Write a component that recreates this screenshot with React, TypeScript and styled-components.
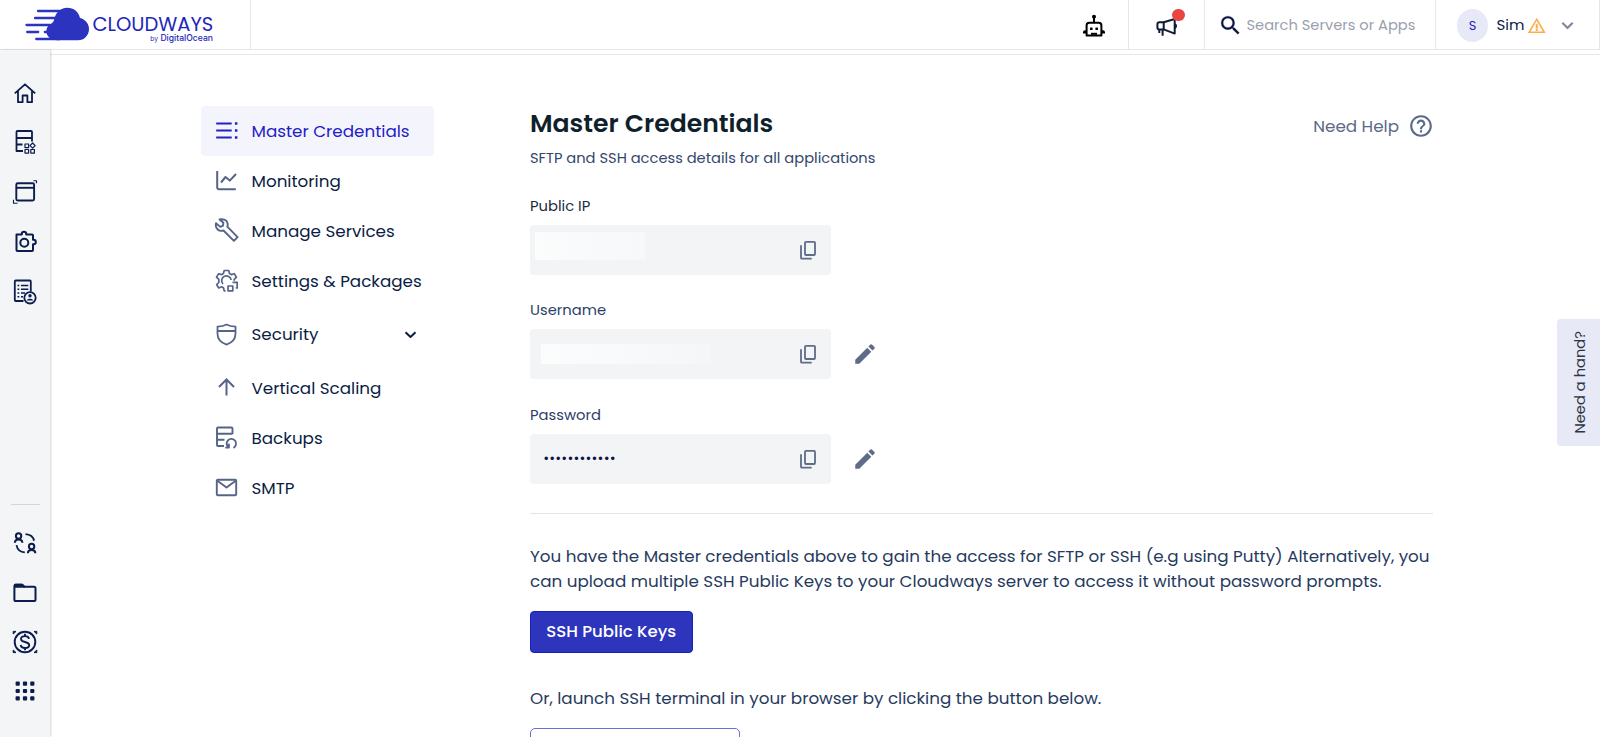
import React from 'react';
import styled, { createGlobalStyle } from 'styled-components';
import { MdEdit, MdExpandMore, MdHelpOutline, MdSearch, MdWarningAmber } from 'react-icons/md';

const GlobalStyle = createGlobalStyle`
  *, *::before, *::after { box-sizing: border-box; }
  body {
    margin: 0;
    background: #fff;
    color: #0b1c45;
    font-family: Poppins, Inter, "Liberation Sans", sans-serif;
    font-size: 16.76px;
    overflow: hidden;
  }
  svg { display: block; flex: none; }
`;

const Page = styled.div`
  height: 737px;
  display: flex;
  flex-direction: column;
  overflow: hidden;
`;

/* ---------- header ---------- */

const Header = styled.header`
  flex: none;
  height: 50px;
  display: flex;
  border-bottom: 1px solid #e6e7e9;
`;

const Brand = styled.div`
  width: 251px;
  padding-left: 25px;
  display: flex;
  border-right: 1px solid #e6e7eb;
  color: #2b33bf;
`;

const BrandText = styled.div`
  width: 121px;
  margin-left: 2.5px;
  padding-top: 14.5px;
  display: flex;
  flex-direction: column;
`;

const BrandName = styled.span`
  font-size: 19.5px;
  font-weight: 400;
  line-height: 20px;
  color: #1e27b8;
`;

const BrandOwner = styled.span`
  align-self: flex-end;
  font-family: Inter, sans-serif;
  font-size: 8.6px;
  font-weight: 500;
  line-height: 9px;
  margin-top: -1px;
  margin-right: 0.5px;
  color: #1e27b8;
`;

const BrandBy = styled.span`
  font-size: 6.6px;
  font-weight: 400;
  margin-right: 2.5px;
`;

const HeaderCell = styled.div<{ $width: number }>`
  width: ${(p) => p.$width}px;
  display: flex;
  align-items: center;
  border-right: 1px solid #e6e7eb;
`;

const RobotCell = styled(HeaderCell)`
  margin-left: auto;
  padding: 3px 0 0 21px;
  color: #000;
`;

const NewsCell = styled(HeaderCell)`
  position: relative;
  padding: 4px 0 0 25px;
  color: #101c33;
`;

const Badge = styled.i`
  position: absolute;
  left: 43.5px;
  top: 8.5px;
  width: 12.5px;
  height: 12.5px;
  border-radius: 50%;
  background: #ec4343;
`;

const SearchCell = styled(HeaderCell)`
  padding: 2px 0 0 12.5px;
  gap: 4px;
  color: #9a9fae;
  font-size: 14.67px;
  svg { color: #0a1440; }
  path:last-child { stroke: currentColor; stroke-width: 0.2; }
`;

const UserCell = styled(HeaderCell)`
  padding: 2px 0 0 21px;
  svg { margin-left: 3px; }
`;

const Avatar = styled.span`
  width: 31px;
  height: 32.5px;
  border-radius: 50%;
  display: grid;
  place-items: center;
  background: #e8e9f7;
  color: #2024c4;
  font-size: 13px;
`;

const UserName = styled.span`
  margin: -2px 0 0 8.5px;
  font-size: 15px;
`;

const WarningIcon = styled(MdWarningAmber)`
  color: #ffad49;
  path:last-child { stroke: currentColor; stroke-width: 0.6; }
`;

const Chevron = styled(MdExpandMore)`
  && { margin-left: 9px; }
  color: #7d879b;
  path:last-child { stroke: currentColor; stroke-width: 0.3; }
`;

/* ---------- frame ---------- */

const Frame = styled.div`
  flex: 1;
  min-height: 0;
  display: flex;
`;

const Sidebar = styled.nav`
  z-index: 1;
  flex: none;
  width: 50px;
  padding: 18.5px 0 21px;
  display: flex;
  flex-direction: column;
  background: #f3f5f7;
  box-shadow: 1px 0 2px rgba(0, 0, 0, 0.16);
  color: #0b1c4d;
`;

const SideItem = styled.a`
  height: 49.5px;
  display: flex;
  align-items: center;
  justify-content: center;
`;

const SideRule = styled.hr`
  width: 29px;
  margin: auto auto 13px 11px;
  border: 0;
  border-top: 1.5px solid #d3d5d9;
`;

const Main = styled.main`
  flex: 1;
  min-width: 0;
  display: flex;
  flex-direction: column;
`;

const TopStrip = styled.div`
  flex: none;
  height: 5px;
  border-bottom: 1px solid #e6e7e9;
`;

const Columns = styled.div`
  display: flex;
  padding-left: 151px;
`;

/* ---------- server menu ---------- */

const Menu = styled.nav`
  width: 233px;
  padding-top: 50.5px;
`;

const MenuItem = styled.a<{ $active?: boolean; $tall?: boolean }>`
  height: ${(p) => (p.$tall ? 56.4 : 50.15)}px;
  padding: 0 17px 0 12.5px;
  display: flex;
  align-items: center;
  gap: 13px;
  border-radius: 4px;
  background: ${(p) => (p.$active ? '#f4f5fc' : 'transparent')};
  color: ${(p) => (p.$active ? '#2420c4' : '#0b1c45')};
  > svg:first-child { color: ${(p) => (p.$active ? '#2420c4' : '#566488')}; }
`;

const MenuLabel = styled.span`
  flex: 1;
  white-space: nowrap;
`;

/* ---------- content ---------- */

const Content = styled.section`
  width: 903px;
  margin-left: 96px;
  padding-top: 50px;
`;

const TitleRow = styled.div`
  display: flex;
  justify-content: space-between;
  align-items: flex-start;
`;

const Title = styled.h1`
  margin: 0;
  font-size: 25.14px;
  font-weight: 600;
  line-height: 38px;
  color: #101f2c;
`;

const Help = styled.a`
  display: flex;
  align-items: center;
  gap: 8.5px;
  margin: 8px -0.5px 0 0;
  color: #5c6a87;
  line-height: 26px;
`;

const Subtitle = styled.p`
  margin: 2.7px 0 0;
  font-size: 14.67px;
  line-height: 24px;
  color: #34476d;
`;

const Field = styled.div`
  height: 104.8px;
  padding-top: 24px;
`;

const Label = styled.label<{ $dark?: boolean }>`
  display: block;
  font-size: 14.75px;
  line-height: 24px;
  color: ${(p) => (p.$dark ? '#1f2b3f' : '#2d4068')};
`;

const FieldRow = styled.div`
  margin-top: 7px;
  display: flex;
  align-items: center;
  gap: 20.5px;
  color: #5f6c88;
`;

const ValueBox = styled.div`
  width: 301px;
  height: 50px;
  padding-right: 13px;
  display: flex;
  align-items: center;
  justify-content: space-between;
  border-radius: 4px;
  background: #f3f4f6;
`;

const Redacted = styled.span<{ $width: number; $height: number; $left: number; $lift?: number }>`
  width: ${(p) => p.$width}px;
  height: ${(p) => p.$height}px;
  margin-left: ${(p) => p.$left}px;
  margin-bottom: ${(p) => p.$lift ?? 0}px;
  background: linear-gradient(90deg, #fbfcfc, #f9fafb 40%, ${(p) => (p.$lift ? '#f7f8fa' : '#f5f6f8')});
`;

const Dots = styled.span`
  margin-left: 14px;
  font-family: "Liberation Sans", sans-serif;
  font-size: 12.6px;
  letter-spacing: 1.63px;
  color: #0b1745;
`;

const Rule = styled.hr`
  margin: 29.2px 0 0;
  border: 0;
  border-top: 1px solid #e3e4e7;
`;

const Paragraph = styled.p<{ $top: number }>`
  margin: ${(p) => p.$top}px 0 0;
  line-height: 25.14px;
  white-space: nowrap;
  color: #263a60;
`;

const PrimaryButton = styled.button`
  display: block;
  width: 162.5px;
  height: 41.5px;
  margin-top: 16.5px;
  padding: 0;
  border: 1px solid #1a1fb4;
  border-radius: 4px;
  background: #2d35bd;
  color: #fff;
  font: 500 16.55px Poppins, Inter, sans-serif;
`;

const OutlineButton = styled.button`
  display: block;
  width: 210px;
  height: 42px;
  margin-top: 17px;
  border: 1px solid #6b70d6;
  border-radius: 5px;
  background: #fff;
`;

const HandTab = styled.aside`
  position: absolute;
  right: 0;
  top: 318.5px;
  width: 43.5px;
  height: 127px;
  display: grid;
  place-items: center;
  border-radius: 4px 0 0 4px;
  background: #e8e9f7;
  color: #2b3744;
  font-size: 14.7px;
  span {
    writing-mode: vertical-rl;
    transform: rotate(180deg);
    margin-left: 4px;
    white-space: nowrap;
  }
`;

/* ---------- icons ---------- */

type IconProps = { size?: number; box?: number; stroke?: number; children: React.ReactNode };

const Icon = ({ size = 30, box = 30, stroke = 1.8, children }: IconProps) => (
  <svg
    width={size}
    height={size}
    viewBox={`0 0 ${box} ${box}`}
    fill="none"
    stroke="currentColor"
    strokeWidth={stroke}
    strokeLinejoin="round"
  >
    {children}
  </svg>
);

const CloudMark = () => (
  <svg width="65" height="49" viewBox="25 0 65 49" fill="currentColor">
    <path d="M57 40.3c-6 0-10.7-4-10.7-9 0-3.200 1.700-5.500 4.200-7.300 1.200-.8 2.400-1.500 3.300-3.300C55.600 12.500 60 7.700 67.300 7.700c6.500 0 11.300 4 12.700 10.300 5.300 1.300 9 5.600 9 11 0 6.300-4.800 11.300-11 11.300z" />
    <path
      d="M38 11h22M35 18h20M26.500 25H50M27.200 32h11M44.800 32h4M36.200 39H60"
      stroke="currentColor"
      strokeWidth="2.300"
      strokeLinecap="round"
    />
  </svg>
);

const RobotIcon = () => (
  <Icon size={24} box={24} stroke={2}>
    <circle cx="12" cy="2.800" r="2" fill="currentColor" stroke="none" />
    <path d="M12 4v5" />
    <path d="M7.200 8.800h9.600a2.600 2.600 0 0 1 2.600 2.600v10H4.600v-10a2.600 2.600 0 0 1 2.600-2.600z" />
    <path d="M4.600 16.200H3a2 2 0 0 0-2 2v1.200h3.600M19.400 16.200H21a2 2 0 0 1 2 2v1.200h-3.600" fill="currentColor" stroke="none" />
    <rect x="8" y="13.500" width="2.600" height="2.600" rx=".6" fill="currentColor" stroke="none" />
    <rect x="13.400" y="13.500" width="2.600" height="2.600" rx=".6" fill="currentColor" stroke="none" />
    <path d="M9 19.800h6" />
  </Icon>
);

const MegaphoneIcon = () => (
  <Icon size={24} box={24} stroke={2}>
    <path d="M9.700 7.200H5.400a2 2 0 0 0-2 2v3.200a2 2 0 0 0 2 2h4.300z" />
    <path d="M9.700 7.200 20.700 4v14.600l-11-4.200" />
    <path d="M5.300 14.400v3.500M8.600 14.400v6.300" />
    <path d="M20.700 9.200a2 2 0 0 1 0 3.800" fill="currentColor" />
  </Icon>
);

const HomeIcon = () => (
  <Icon>
    <path d="M4.800 15.400 15 6.300l10.200 9.100M8 13v11.200h4.600v-6.700h4.800v6.700H22V13" />
  </Icon>
);

const ServerAppsIcon = () => (
  <Icon>
    <path d="M22 13.500V4a1 1 0 0 0-1-1H7.500a1 1 0 0 0-1 1v19h6.500M6.500 10H22M6.500 16.500h6" />
    <g strokeWidth="1.200">
      <rect x="15" y="16" width="3.600" height="3.600" />
      <rect x="15" y="21.500" width="3.600" height="3.600" />
      <rect x="20.800" y="21.500" width="3.600" height="3.600" />
      <path d="m22.600 15 2.600 2.600-2.600 2.600-2.600-2.600z" />
    </g>
  </Icon>
);

const WindowIcon = () => (
  <Icon stroke={1.9}>
    <rect x="6.300" y="6.300" width="17.800" height="17.200" rx="1.500" />
    <path d="M6.300 10.800h17.800" />
    <path d="M23.500 3.700h3v2.500M3.500 22.800v3.500h4" strokeWidth="1.100" />
  </Icon>
);

const PuzzleIcon = () => (
  <Icon stroke={2}>
    <path d="M6.500 7.500h5.300V7a2.200 2.200 0 0 1 4.400 0v.5H22a1 1 0 0 1 1 1v4.300h.600a2.200 2.200 0 0 1 0 4.400H23v5.700a1 1 0 0 1-1 1H7.500a1 1 0 0 1-1-1z" />
    <circle cx="14.300" cy="15.700" r="4" />
  </Icon>
);

const ListUserIcon = () => (
  <Icon>
    <path d="M13.500 25H5.800a1 1 0 0 1-1-1V5.500a1 1 0 0 1 1-1h14a1 1 0 0 1 1 1v10" />
    <path d="M7.500 9.500h1.800M11 9.500h7.300M7.500 13.200h1.800M11 13.200h7.300M7.500 17h1.800M11 17h4M7.500 20.800h1.800M11 20.800h2" strokeWidth="1.500" />
    <circle cx="20" cy="21.800" r="5.700" />
    <circle cx="20" cy="19.800" r="1.700" fill="currentColor" stroke="none" />
    <path d="M16.800 24.600c.6-2.400 5.800-2.400 6.400 0z" fill="currentColor" stroke="none" />
  </Icon>
);

const UsersSwapIcon = () => (
  <Icon stroke={2}>
    <circle cx="8.600" cy="8" r="2.700" />
    <path d="M4.800 14.700c.3-4.200 7.300-4.200 7.600 0" />
    <circle cx="21.600" cy="18.500" r="2.700" />
    <path d="M17.800 25.200c.3-4.200 7.300-4.200 7.600 0" />
    <path d="M15.500 6.200c4.500.3 7.800 2.700 8.600 6.600M6.500 17.200c.8 4.300 4.200 7 8.300 7.200" strokeWidth="1.800" />
  </Icon>
);

const FolderIcon = () => (
  <Icon stroke={2}>
    <path d="M4.400 23V9.300a1.500 1.500 0 0 1 1.500-1.500h6.300l2.200 2H24a1.500 1.500 0 0 1 1.500 1.500V23a1 1 0 0 1-1 1h-19a1 1 0 0 1-1.100-1z" />
    <path d="M5 7.800h7l2 2H5z" fill="currentColor" />
  </Icon>
);

const DollarIcon = () => (
  <Icon stroke={1.9}>
    <circle cx="15" cy="15" r="10.300" />
    <path d="M19 11.800c-.3-1.700-1.900-2.700-4-2.700-2.300 0-4 1-4 2.900 0 4.200 8.200 1.700 8.200 6 0 1.900-1.800 3-4.200 3s-4-1.100-4.300-3M15 6.800v2.300M15 21v2.300" />
    <path d="M3.200 7V4.400H6zM26.800 7V4.400H24zM3.200 23v2.600H6zM26.800 23v2.600H24z" fill="currentColor" strokeWidth="1" />
  </Icon>
);

const GridIcon = () => (
  <Icon>
    {[7.7, 15, 22.3].flatMap((y) =>
      [7.7, 15, 22.3].map((x) => (
        <rect key={`${x}-${y}`} x={x - 2.1} y={y - 2.1} width="4.200" height="4.200" rx="1" fill="currentColor" stroke="none" />
      )),
    )}
  </Icon>
);

const CredentialsIcon = () => (
  <Icon size={25} box={25} stroke={2}>
    <path d="M2.200 5.500h15.500M2.200 12.500h15.500M2.200 19.500h15.500" />
    <path d="M20.900 5.500h2.500M20.900 12.500h2.500M20.900 19.500h2.500" strokeWidth="2.500" />
  </Icon>
);

const MonitoringIcon = () => (
  <Icon size={25} box={25} stroke={2}>
    <path d="M3.200 3v16.500a1.800 1.800 0 0 0 1.800 1.800h16.800" />
    <path d="M7 14.500 11.500 9l4.300 3.600L22 6" />
  </Icon>
);

const WrenchIcon = () => (
  <Icon size={25} box={25} stroke={1.9}>
    <path d="M2 5.200 6.300 8.900 9 7.600l.400-2.900-3.900-3.200c3-.9 7.200.2 8 3.500.4 1.500.2 2.700-.2 3.700l10.300 10.400-3.700 3.700L9.500 12.500c-3 .9-5.800-.2-7-2.600-.7-1.400-.9-3.200-.5-4.700z" />
  </Icon>
);

const SettingsIcon = () => (
  <Icon size={25} box={25} stroke={1.7}>
    <path d="M11.500 22.800h-1.300l-.8-3.100-1.700-.9-2.900 1.200-2.100-3.300 2.100-2.200v-3.200L2.500 9.100l2.200-3.400 3 .9 1.700-1 .8-3.100h4.500l.8 3.100 1.700 1 3-.9 2.200 3.400-2.200 2.200.1 1.500" />
    <path d="M9 16a4.800 4.800 0 1 1 8.200-4" />
    <rect x="14" y="18" width="4.800" height="4.800" />
    <path d="M18.500 14.300h4.700V20h-1.500" />
  </Icon>
);

const ShieldIcon = () => (
  <Icon size={25} box={25} stroke={1.8}>
    <path d="M12.500 2.600c2.700 1.600 5.700 2 9 2v7.200c0 5-3.700 9-9 10.800-5.300-1.800-9-5.800-9-10.800V4.600c3.300 0 6.300-.4 9-2zM3.500 9h18" />
  </Icon>
);

const ArrowUpIcon = () => (
  <Icon size={25} box={25} stroke={2}>
    <path d="M12.500 20.500V5M5 12l7.500-7.500L20 12" strokeLinejoin="miter" />
  </Icon>
);

const BackupIcon = () => (
  <Icon size={25} box={25} stroke={1.9}>
    <path d="M18.500 9V3.500a1 1 0 0 0-1-1H4a1 1 0 0 0-1 1V20a1 1 0 0 0 1 1h6M3 8.700h15.500M3 14.800h7.500" />
    <path d="M14.800 22.500a4.700 4.700 0 1 1 4.600.300M11.300 22.600h3.600v-3.800" />
  </Icon>
);

const MailIcon = () => (
  <Icon size={25} box={25} stroke={1.9}>
    <rect x="2.800" y="4.700" width="19.400" height="15.600" rx="1" />
    <path d="m3 5.500 9.500 7 9.500-7" />
  </Icon>
);

const CopyIcon = () => (
  <Icon size={20} box={20} stroke={1.8}>
    <rect x="7" y="1.800" width="10" height="13.200" rx="1" />
    <path d="M3 5.200v12.500a1 1 0 0 0 1 1h9.700" />
  </Icon>
);

const SmallChevron = () => (
  <Icon size={13} box={13} stroke={2}>
    <path d="m1.500 4.200 5 4.800 5-4.800" />
  </Icon>
);

/* ---------- page ---------- */

const topLinks = [HomeIcon, ServerAppsIcon, WindowIcon, PuzzleIcon, ListUserIcon];
const bottomLinks = [UsersSwapIcon, FolderIcon, DollarIcon, GridIcon];

const menu = [
  { label: 'Master Credentials', Glyph: CredentialsIcon, active: true },
  { label: 'Monitoring', Glyph: MonitoringIcon },
  { label: 'Manage Services', Glyph: WrenchIcon },
  { label: 'Settings & Packages', Glyph: SettingsIcon },
  { label: 'Security', Glyph: ShieldIcon, expandable: true },
  { label: 'Vertical Scaling', Glyph: ArrowUpIcon },
  { label: 'Backups', Glyph: BackupIcon },
  { label: 'SMTP', Glyph: MailIcon },
];

export default function App() {
  return (
    <Page>
      <GlobalStyle />
      <Header>
        <Brand>
          <CloudMark />
          <BrandText>
            <BrandName>CLOUDWAYS</BrandName>
            <BrandOwner>
              <BrandBy>by</BrandBy>DigitalOcean
            </BrandOwner>
          </BrandText>
        </Brand>
        <RobotCell $width={67.5}>
          <RobotIcon />
        </RobotCell>
        <NewsCell $width={76.5}>
          <MegaphoneIcon />
          <Badge />
        </NewsCell>
        <SearchCell $width={231}>
          <MdSearch size={25} />
          Search Servers or Apps
        </SearchCell>
        <UserCell $width={164}>
          <Avatar>S</Avatar>
          <UserName>Sim</UserName>
          <WarningIcon size={19.5} />
          <Chevron size={23} />
        </UserCell>
      </Header>

      <Frame>
        <Sidebar>
          {topLinks.map((Glyph, i) => (
            <SideItem key={i}>
              <Glyph />
            </SideItem>
          ))}
          <SideRule />
          {bottomLinks.map((Glyph, i) => (
            <SideItem key={i}>
              <Glyph />
            </SideItem>
          ))}
        </Sidebar>

        <Main>
          <TopStrip />
          <Columns>
            <Menu>
              {menu.map(({ label, Glyph, active, expandable }) => (
                <MenuItem key={label} $active={active} $tall={expandable}>
                  <Glyph />
                  <MenuLabel>{label}</MenuLabel>
                  {expandable && <SmallChevron />}
                </MenuItem>
              ))}
            </Menu>

            <Content>
              <TitleRow>
                <Title>Master Credentials</Title>
                <Help>
                  Need Help
                  <MdHelpOutline size={26} />
                </Help>
              </TitleRow>
              <Subtitle>SFTP and SSH access details for all applications</Subtitle>

              <Field>
                <Label $dark>Public IP</Label>
                <FieldRow>
                  <ValueBox>
                    <Redacted $width={110} $height={28} $left={5} $lift={7} />
                    <CopyIcon />
                  </ValueBox>
                </FieldRow>
              </Field>
              <Field>
                <Label>Username</Label>
                <FieldRow>
                  <ValueBox>
                    <Redacted $width={170} $height={20} $left={11} />
                    <CopyIcon />
                  </ValueBox>
                  <MdEdit size={26} />
                </FieldRow>
              </Field>
              <Field>
                <Label>Password</Label>
                <FieldRow>
                  <ValueBox>
                    <Dots>••••••••••••</Dots>
                    <CopyIcon />
                  </ValueBox>
                  <MdEdit size={26} />
                </FieldRow>
              </Field>

              <Rule />
              <Paragraph $top={30}>
                You have the Master credentials above to gain the access for SFTP or SSH (e.g using Putty) Alternatively, you
                <br />
                can upload multiple SSH Public Keys to your Cloudways server to access it without password prompts.
              </Paragraph>
              <PrimaryButton>SSH Public Keys</PrimaryButton>
              <Paragraph $top={33.5}>Or, launch SSH terminal in your browser by clicking the button below.</Paragraph>
              <OutlineButton aria-label="Launch SSH Terminal" />
            </Content>
          </Columns>
        </Main>
      </Frame>

      <HandTab>
        <span>Need a hand?</span>
      </HandTab>
    </Page>
  );
}
